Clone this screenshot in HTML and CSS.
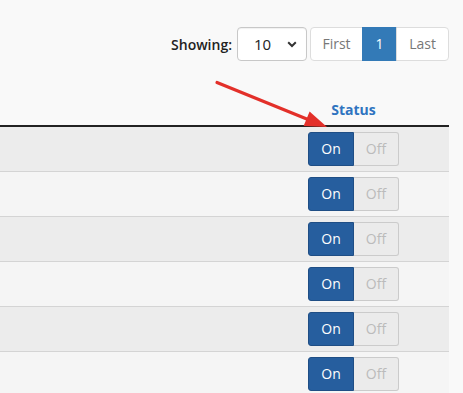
FILE: index.html
```html
<!DOCTYPE html>
<html>
<head>
<meta charset="utf-8">
<link rel="stylesheet" href="styles.css">
</head>
<body>
<div class="page">
  <div class="toolbar">
    <label class="showing" for="perpage">Showing:</label>
    <div class="select-wrap">
      <select id="perpage" class="select"><option>10</option><option>25</option><option>50</option></select>
      <svg class="chev" width="10" height="7" viewBox="0 0 10 7"><path d="M1.2 1.3 L5 5 L8.8 1.3" fill="none" stroke="#333" stroke-width="2"/></svg>
    </div>
    <ul class="pager">
      <li class="pg">First</li>
      <li class="pg active">1</li>
      <li class="pg">Last</li>
    </ul>
  </div>
  <table class="grid">
    <thead>
      <tr><th class="c-main"></th><th class="c-status">Status</th></tr>
    </thead>
    <tbody>
      <tr><td></td><td class="c-status"><div class="toggle"><span class="on">On</span><span class="off">Off</span></div></td></tr>
      <tr><td></td><td class="c-status"><div class="toggle"><span class="on">On</span><span class="off">Off</span></div></td></tr>
      <tr><td></td><td class="c-status"><div class="toggle"><span class="on">On</span><span class="off">Off</span></div></td></tr>
      <tr><td></td><td class="c-status"><div class="toggle"><span class="on">On</span><span class="off">Off</span></div></td></tr>
      <tr><td></td><td class="c-status"><div class="toggle"><span class="on">On</span><span class="off">Off</span></div></td></tr>
      <tr><td></td><td class="c-status"><div class="toggle"><span class="on">On</span><span class="off">Off</span></div></td></tr>
    </tbody>
  </table>
</div>
<svg class="arrow" width="463" height="393" viewBox="0 0 463 393">
  <line x1="217" y1="82.5" x2="308" y2="119.5" stroke="#e3302a" stroke-width="3.2" stroke-linecap="round"/>
  <polygon points="327,127 303.6,126 309.6,111.4" fill="#e3302a"/>
</svg>
</body>
</html>
```

FILE: styles.css
```css
html, body {
  margin: 0;
  padding: 0;
  background: #f9f9f9;
  font-family: "Open Sans", "Liberation Sans", sans-serif;
  color: #333;
}
.page {
  width: 449px;
  overflow: hidden;
}
.toolbar {
  display: flex;
  justify-content: flex-end;
  align-items: center;
  padding-top: 27px;
  height: 34px;
  margin-bottom: 39px;
}
.showing {
  font-size: 14px;
  font-weight: 600;
  color: #222;
  margin-right: 5px;
}
.select-wrap {
  position: relative;
  width: 70px;
  height: 34px;
  margin-right: 3px;
}
.select {
  appearance: none;
  -webkit-appearance: none;
  box-sizing: border-box;
  width: 70px;
  height: 34px;
  border: 1px solid #c8c8c8;
  border-radius: 4px;
  background: #fff;
  font-family: "Open Sans", "Liberation Sans", sans-serif;
  font-size: 15px;
  color: #222;
  padding: 0 0 0 16px;
  margin: 0;
  box-shadow: inset 0 1px 1px rgba(0,0,0,0.06);
}
.chev {
  position: absolute;
  right: 10px;
  top: 14px;
  pointer-events: none;
}
.pager {
  display: flex;
  list-style: none;
  margin: 0;
  padding: 0;
}
.pg {
  box-sizing: border-box;
  height: 34px;
  line-height: 32px;
  font-size: 14px;
  color: #777;
  background: #fff;
  border: 1px solid #ddd;
  padding: 0 12px;
  margin-left: -1px;
}
.pg:first-child {
  border-radius: 4px 0 0 4px;
  margin-left: 0;
  width: 53px;
  padding: 0;
  text-align: center;
}
.pg:last-child {
  border-radius: 0 4px 4px 0;
  width: 53px;
  padding: 0;
  text-align: center;
}
.pg.active {
  background: #337ab7;
  border-color: #337ab7;
  color: #fff;
  width: 35px;
  padding: 0;
  text-align: center;
}
.grid {
  width: 449px;
  border-collapse: separate;
  border-spacing: 0;
}
.grid th {
  padding: 0 0 5px;
  line-height: 20px;
  border-bottom: 2px solid #222;
  font-size: 14px;
  font-weight: 700;
  color: #2f74c0;
}
.c-status {
  width: 191px;
  text-align: center;
}
.grid td {
  height: 44px;
  padding: 0;
  box-sizing: content-box;
  border-bottom: 1px solid #d4d4d4;
  vertical-align: middle;
}
.grid tbody tr:nth-child(odd) td {
  background: #ececec;
}
.grid tbody tr:nth-child(even) td {
  background: #f5f5f5;
}
.toggle {
  display: inline-flex;
  height: 34px;
}
.toggle span {
  box-sizing: border-box;
  height: 34px;
  line-height: 32px;
  font-size: 14px;
}
.on {
  width: 46px;
  background: #265e9e;
  border: 1px solid #1f4e85;
  border-radius: 3px 0 0 3px;
  color: #fff;
}
.off {
  width: 45px;
  background: #ebebeb;
  border: 1px solid #cbcbcb;
  border-left: none;
  border-radius: 0 3px 3px 0;
  color: #bbb;
}
.arrow {
  position: absolute;
  left: 0;
  top: 0;
  pointer-events: none;
}
```
